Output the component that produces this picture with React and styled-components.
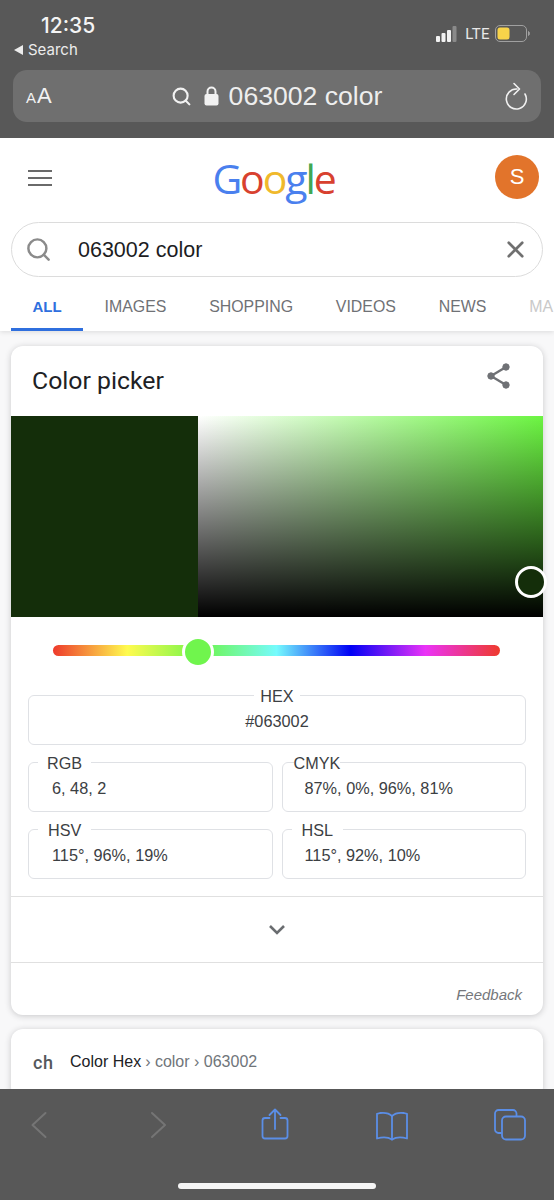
import React from "react";
import styled, { createGlobalStyle } from "styled-components";
import { Search, X } from "lucide-react";

const GlobalStyle = createGlobalStyle`
  html, body {
    margin: 0;
    padding: 0;
    background: #f8f8f9;
  }
  * {
    box-sizing: border-box;
  }
`;

const Page = styled.div`
  width: 554px;
  height: 1200px;
  display: flex;
  flex-direction: column;
  overflow: hidden;
  font-family: "Liberation Sans", Arial, sans-serif;
`;

/* Safari top chrome */
const TopChrome = styled.div`
  height: 138px;
  background: #585858;
  padding: 0 13px;
  flex-shrink: 0;
  display: flex;
  flex-direction: column;
`;

const StatusBar = styled.div`
  height: 70px;
  display: flex;
  justify-content: space-between;
  align-items: flex-start;
`;

const TimeBlock = styled.div`
  display: flex;
  flex-direction: column;
  color: #f4f4f4;
`;

const Time = styled.div`
  font-family: Inter, sans-serif;
  font-weight: 500;
  font-size: 21px;
  line-height: 24px;
  margin: 14px 0 0 28px;
`;

const BackLink = styled.div`
  font-family: Inter, sans-serif;
  font-size: 15px;
  line-height: 20px;
  margin-top: 2px;
  display: flex;
  align-items: center;
  gap: 5px;
  color: #ececec;
`;

const BackArrow = styled.span`
  width: 0;
  height: 0;
  margin-left: 1px;
  border-style: solid;
  border-width: 5px 9px 5px 0;
  border-color: transparent #ececec transparent transparent;
`;

const Indicators = styled.div`
  display: flex;
  align-items: center;
  margin: 24px 10px 0 0;
  color: #e8e8e8;
`;

const Lte = styled.span`
  font-family: "Roboto", sans-serif;
  font-size: 15px;
  line-height: 20px;
  margin: 0 5px 0 8px;
  letter-spacing: 0.4px;
`;

const AddressBar = styled.div`
  height: 52px;
  border-radius: 14px;
  background: #6f6f6f;
  display: flex;
  align-items: center;
  justify-content: space-between;
  padding: 0 13px;
  color: #f2f2f2;
`;

const TextSize = styled.div`
  display: flex;
  align-items: baseline;
  width: 40px;
`;

const SmallA = styled.span`
  font-size: 15px;
  margin-right: 1px;
`;

const LargeA = styled.span`
  font-size: 22px;
`;

const AddressCenter = styled.div`
  display: flex;
  align-items: center;
  margin-right: 17px;
`;

const AddressSearch = styled(Search)`
  margin-right: 12px;
`;

const AddressText = styled.span`
  font-size: 26.6px;
  font-weight: 400;
  margin-left: 10px;
  color: #eeeeee;
`;

/* Scrolled page */
const Content = styled.div`
  flex: 1;
  min-height: 0;
  overflow: hidden;
  background: #f8f8f9;
`;

const GoogleHeader = styled.div`
  background: #fff;
  box-shadow: 0 1px 5px rgba(0, 0, 0, 0.12);
  height: 193px;
  display: flex;
  flex-direction: column;
  padding-top: 17px;
`;

const LogoRow = styled.div`
  height: 50px;
  display: flex;
  align-items: center;
  justify-content: space-between;
  padding: 0 15px 6px 28px;
`;

const Hamburger = styled.div`
  width: 24px;
  display: flex;
  flex-direction: column;
  gap: 4.5px;
  margin-top: 2px;
`;

const HamburgerLine = styled.span`
  height: 2.5px;
  background: #6a6a6a;
`;

const Logo = styled.div`
  font-family: "Open Sans", sans-serif;
  font-size: 41px;
  font-weight: 500;
  letter-spacing: -2.1px;
  line-height: 50px;
  padding-top: 2px;
`;

const LogoLetter = styled.span`
  color: ${({ $color }) => $color};
`;

const Avatar = styled.div`
  width: 44px;
  height: 44px;
  border-radius: 50%;
  background: #e2742b;
  color: #fff;
  font-size: 22px;
  display: flex;
  align-items: center;
  justify-content: center;
`;

const SearchBox = styled.div`
  margin: 17px 11px 0;
  height: 55px;
  border: 1.5px solid #dcdcdc;
  border-radius: 28px;
  display: flex;
  align-items: center;
  padding: 0 13px 0 13px;
  color: #8b8b8b;
`;

const SearchText = styled.span`
  flex: 1;
  margin-left: 26px;
  padding-top: 2px;
  font-size: 21.5px;
  color: #1d1d1f;
`;

const Tabs = styled.div`
  display: flex;
  margin: 14px 0 0 11px;
  height: 40px;
  white-space: nowrap;
`;

const Tab = styled.div`
  padding: 7px ${({ $active }) => ($active ? 21.5 : 21.4)}px 0;
  height: 40px;
  font-size: ${({ $active }) => ($active ? 15 : 15.9)}px;
  line-height: 18px;
  font-weight: ${({ $active }) => ($active ? 700 : 400)};
  color: ${({ $active, $faded }) =>
    $active ? "#2f6fde" : $faded ? "#c9c9c9" : "#6f7175"};
  border-bottom: 3px solid ${({ $active }) => ($active ? "#2f6fde" : "transparent")};
`;

const Card = styled.div`
  margin: ${({ $top }) => $top}px 11px 0;
  background: #fff;
  border-radius: 12px;
  box-shadow: 0 1px 6px rgba(32, 33, 36, 0.22);
`;

const CardHead = styled.div`
  height: 70px;
  display: flex;
  align-items: center;
  justify-content: space-between;
  padding: 0 31px 0 21px;
`;

const CardTitle = styled.h2`
  margin: 0 0 2px;
  font-family: Roboto, sans-serif;
  font-size: 24.8px;
  font-weight: 400;
  color: #202124;
`;

const ShareGlyph = styled.svg`
  margin-bottom: 10px;
  fill: #6f7175;
  stroke: #6f7175;
`;

const Picker = styled.div`
  position: relative;
  height: 201px;
  display: flex;
`;

const Swatch = styled.div`
  width: 187px;
  background: #142e0a;
`;

const Saturation = styled.div`
  flex: 1;
  background: linear-gradient(to bottom, rgba(0, 0, 0, 0), #000),
    linear-gradient(to right, #fff, #6cf542);
`;

const PickerHandle = styled.div`
  position: absolute;
  right: -4px;
  bottom: 19px;
  width: 32px;
  height: 32px;
  border-radius: 50%;
  border: 3px solid #fff;
  background: #142e0a;
`;

const SliderRow = styled.div`
  position: relative;
  margin: 28px 43px 0 42px;
  height: 11px;
  border-radius: 6px;
  background: linear-gradient(
    to right,
    #ee3a2c 0%,
    #fffb4f 16.6%,
    #6ef54a 33.3%,
    #75fbfd 50%,
    #0000f5 66.6%,
    #ea33f7 83.3%,
    #ee3a2c 100%
  );
`;

const SliderThumb = styled.div`
  position: absolute;
  left: 129px;
  top: -9px;
  width: 32px;
  height: 32px;
  border-radius: 50%;
  border: 3px solid #fff;
  background: #70f54d;
`;

const Fields = styled.div`
  display: grid;
  grid-template-columns: 1fr 1fr;
  column-gap: 9px;
  row-gap: 8px;
  padding: 0 17px;
  margin-top: 30px;
`;

const Field = styled.fieldset`
  grid-column: ${({ $wide }) => ($wide ? "1 / -1" : "auto")};
  margin: 0;
  padding: 0;
  height: 59px;
  border: 1.5px solid #dfe1e5;
  border-radius: 6px;
  color: #3c4043;
  text-align: ${({ $wide }) => ($wide ? "center" : "left")};
`;

const FieldLabel = styled.legend`
  margin-left: ${({ $wide, $offset }) => ($wide ? "auto" : `${$offset}px`)};
  margin-right: ${({ $wide }) => ($wide ? "auto" : 0)};
  padding: 1px ${({ $gap }) => $gap}px 0;
  font-size: 16.2px;
  line-height: 18px;
  color: #3c4043;
`;

const FieldValue = styled.div`
  font-size: 16.3px;
  line-height: 18px;
  margin-top: 7px;
  padding-left: ${({ $indent }) => $indent}px;
`;

const Expand = styled.div`
  margin-top: 17px;
  height: 67px;
  border-top: 1.5px solid #e0e0e0;
  border-bottom: 1.5px solid #e0e0e0;
  display: flex;
  align-items: center;
  justify-content: center;
`;

const CardFoot = styled.div`
  height: 52px;
  padding: 13px 21px 0 0;
  text-align: right;
  font-size: 15px;
  font-style: italic;
  line-height: 38px;
  color: #75777b;
`;

const ResultRow = styled.div`
  height: 70px;
  display: flex;
  align-items: center;
  padding: 0 0 4px 21px;
  font-size: 16px;
`;

const SiteMark = styled.span`
  font-family: Roboto, sans-serif;
  font-size: 18px;
  font-weight: 500;
  width: 37px;
  margin-left: 1px;
  color: #55585c;
  letter-spacing: 0.6px;
`;

const SiteName = styled.span`
  color: #202124;
`;

const Crumbs = styled.span`
  color: #70757a;
  margin-left: 4px;
`;

/* Safari bottom toolbar */
const BottomChrome = styled.div`
  height: 111px;
  flex-shrink: 0;
  background: #585858;
  display: flex;
  flex-direction: column;
  align-items: center;
`;

const ToolRow = styled.div`
  width: 100%;
  height: 94px;
  display: flex;
  justify-content: space-between;
  align-items: flex-start;
  padding: 19px 27px 0 22px;
`;

const ToolIcon = styled.svg`
  display: block;
  width: 34px;
  height: 34px;
  fill: none;
  stroke: ${({ $off }) => ($off ? "#757575" : "#5b8ee6")};
  stroke-width: ${({ $off }) => ($off ? 2 : 1.8)};
  stroke-linecap: round;
  stroke-linejoin: round;
`;

const HomeBar = styled.div`
  width: 198px;
  height: 6px;
  border-radius: 3px;
  background: #f5f5f5;
`;

const SignalBars = () => (
  <svg width="21" height="16" viewBox="0 0 21 16">
    <rect x="0" y="10" width="4" height="6" rx="1" fill="#f2f2f2" />
    <rect x="5.5" y="7" width="4" height="9" rx="1" fill="#f2f2f2" />
    <rect x="11" y="4" width="4" height="12" rx="1" fill="#f2f2f2" />
    <rect x="16.5" y="0" width="4" height="16" rx="1" fill="#8a8a8a" />
  </svg>
);

const Battery = () => (
  <svg width="36" height="18" viewBox="0 0 36 18">
    <rect x="0.5" y="0.5" width="31" height="16" rx="4.5" fill="none" stroke="#a0a0a0" />
    <rect x="2.5" y="2.5" width="12" height="12" rx="2.5" fill="#f7d34a" />
    <path d="M33.5 6.5c1.2.5 1.2 3.5 0 4z" fill="#a0a0a0" stroke="#a0a0a0" />
  </svg>
);

const LockIcon = () => (
  <svg width="15" height="20" viewBox="0 0 15 20">
    <path d="M3.5 9V5.500a4 4 0 0 1 8 0V9" fill="none" stroke="#f2f2f2" strokeWidth="2" />
    <rect x="0.5" y="8" width="14" height="11.500" rx="2" fill="#f2f2f2" />
  </svg>
);

const ReloadIcon = () => (
  <svg width="24" height="28" viewBox="0 0 24 28" fill="none" stroke="#f0f0f0" strokeWidth="1.6" strokeLinecap="round" strokeLinejoin="round">
    <path d="M13 7A10 10 0 1 0 21 12" />
    <path d="M10 1.500L15.500 7 10 12.500" />
  </svg>
);

const CardShare = () => (
  <ShareGlyph width="26" height="28" viewBox="0 0 26 28" strokeWidth="2.4">
    <line x1="5" y1="14" x2="20" y2="5" />
    <line x1="5" y1="14" x2="20" y2="23" />
    <circle cx="20" cy="5" r="3.2" strokeWidth="1" />
    <circle cx="5" cy="14" r="3.2" strokeWidth="1" />
    <circle cx="20" cy="23" r="3.2" strokeWidth="1" />
  </ShareGlyph>
);

const Chevron = () => (
  <svg width="18" height="11" viewBox="0 0 18 11" fill="none" stroke="#6a6d70" strokeWidth="2.6">
    <path d="M2 2l7 7 7-7" />
  </svg>
);

const GOOGLE = [
  ["G", "#4a80ee"],
  ["o", "#d8412f"],
  ["o", "#f0b92c"],
  ["g", "#4a80ee"],
  ["l", "#41a854"],
  ["e", "#d8412f"],
];

const TABS = ["ALL", "IMAGES", "SHOPPING", "VIDEOS", "NEWS", "MA"];

const FIELDS = [
  { label: "HEX", value: "#063002", wide: true, gap: 6, indent: 0 },
  { label: "RGB", value: "6, 48, 2", offset: 9, gap: 9, indent: 23 },
  { label: "CMYK", value: "87%, 0%, 96%, 81%", offset: 11, gap: 0, indent: 22 },
  { label: "HSV", value: "115°, 96%, 19%", offset: 9, gap: 10, indent: 23 },
  { label: "HSL", value: "115°, 92%, 10%", offset: 9, gap: 10, indent: 22 },
];

export default function App() {
  return (
    <Page>
      <GlobalStyle />
      <TopChrome>
        <StatusBar>
          <TimeBlock>
            <Time>12:35</Time>
            <BackLink>
              <BackArrow />
              Search
            </BackLink>
          </TimeBlock>
          <Indicators>
            <SignalBars />
            <Lte>LTE</Lte>
            <Battery />
          </Indicators>
        </StatusBar>
        <AddressBar>
          <TextSize>
            <SmallA>A</SmallA>
            <LargeA>A</LargeA>
          </TextSize>
          <AddressCenter>
            <AddressSearch size={21} strokeWidth={2.4} color="#f2f2f2" />
            <LockIcon />
            <AddressText>063002 color</AddressText>
          </AddressCenter>
          <ReloadIcon />
        </AddressBar>
      </TopChrome>

      <Content>
        <GoogleHeader>
          <LogoRow>
            <Hamburger>
              <HamburgerLine />
              <HamburgerLine />
              <HamburgerLine />
            </Hamburger>
            <Logo>
              {GOOGLE.map(([letter, color], i) => (
                <LogoLetter key={i} $color={color}>
                  {letter}
                </LogoLetter>
              ))}
            </Logo>
            <Avatar>S</Avatar>
          </LogoRow>
          <SearchBox>
            <Search size={27} strokeWidth={2.2} />
            <SearchText>063002 color</SearchText>
            <X size={27} strokeWidth={2.4} color="#707070" />
          </SearchBox>
          <Tabs>
            {TABS.map((tab, i) => (
              <Tab key={tab} $active={i === 0} $faded={tab === "MA"}>
                {tab}
              </Tab>
            ))}
          </Tabs>
        </GoogleHeader>

        <Card $top={15}>
          <CardHead>
            <CardTitle>Color picker</CardTitle>
            <CardShare />
          </CardHead>
          <Picker>
            <Swatch />
            <Saturation />
            <PickerHandle />
          </Picker>
          <SliderRow>
            <SliderThumb />
          </SliderRow>
          <Fields>
            {FIELDS.map((f) => (
              <Field key={f.label} $wide={f.wide}>
                <FieldLabel $wide={f.wide} $offset={f.offset} $gap={f.gap}>
                  {f.label}
                </FieldLabel>
                <FieldValue $indent={f.indent}>{f.value}</FieldValue>
              </Field>
            ))}
          </Fields>
          <Expand>
            <Chevron />
          </Expand>
          <CardFoot>Feedback</CardFoot>
        </Card>

        <Card $top={14}>
          <ResultRow>
            <SiteMark>ch</SiteMark>
            <SiteName>Color Hex</SiteName>
            <Crumbs>› color › 063002</Crumbs>
          </ResultRow>
        </Card>
      </Content>

      <BottomChrome>
        <ToolRow>
          <ToolIcon $off viewBox="0 0 34 34">
            <path d="M23.500 5L10.500 17l13 12" />
          </ToolIcon>
          <ToolIcon $off viewBox="0 0 34 34">
            <path d="M12 5l13 12-13 12" />
          </ToolIcon>
          <ToolIcon viewBox="0 0 34 34">
            <path d="M11.500 10H7a2.500 2.500 0 0 0-2.500 2.500V28A2.500 2.500 0 0 0 7 30.500h20a2.500 2.500 0 0 0 2.500-2.500V12.500A2.500 2.500 0 0 0 27 10h-4.500" />
            <path d="M17 21V1.500M11.500 7L17 1.500 22.500 7" />
          </ToolIcon>
          <ToolIcon viewBox="0 0 34 34">
            <path d="M17 8c-3-3-8-3.500-12-3l-3 .8v24.700c5-1.500 11-1.500 15 1 4-2.500 10-2.500 15-1V5.800L29 5c-4-.5-9 0-12 3z" />
            <path d="M17 8v23.500" />
          </ToolIcon>
          <ToolIcon viewBox="0 0 34 34">
            <path d="M8 25H5.500A3.500 3.500 0 0 1 2 21.500v-16A3.500 3.500 0 0 1 5.500 2H20a3.500 3.500 0 0 1 3.500 3.500V8" />
            <rect x="9" y="8.500" width="23" height="23" rx="4" />
          </ToolIcon>
        </ToolRow>
        <HomeBar />
      </BottomChrome>
    </Page>
  );
}
